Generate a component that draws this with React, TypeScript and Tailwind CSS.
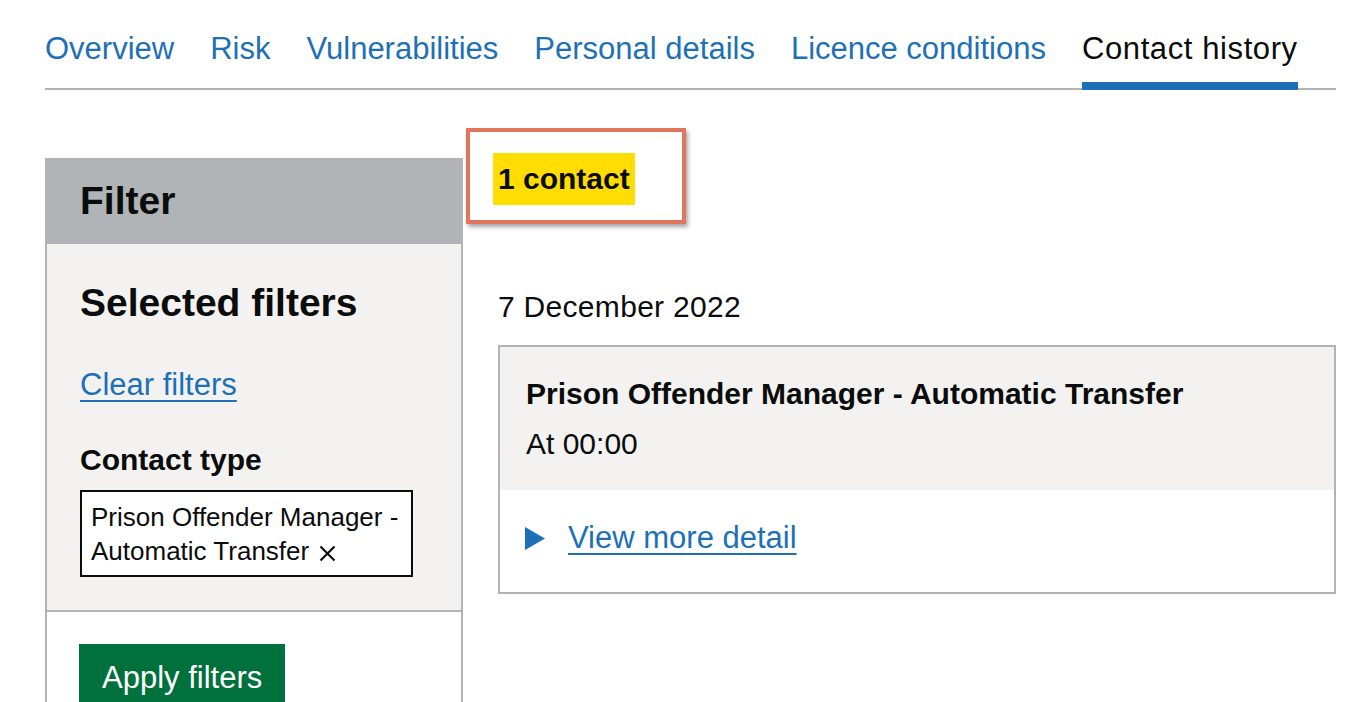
import React from "react";

const TABS = [
  { label: "Overview" },
  { label: "Risk" },
  { label: "Vulnerabilities" },
  { label: "Personal details" },
  { label: "Licence conditions" },
  { label: "Contact history", active: true },
];

function Tabs() {
  return (
    <ul className="flex gap-[36px] pt-[29px] border-b-2 border-[#b1b4b6]">
      {TABS.map((t) => (
        <li key={t.label} className="relative pb-[19px]">
          <a
            href="#"
            className={`block text-[31px] leading-[40px] ${
              t.active ? "text-[#0b0c0c] tracking-[0.6px]" : "text-[#1d70b8]"
            }`}
          >
            {t.label}
          </a>
          {t.active && (
            <span className="absolute left-0 right-0 bottom-[-2px] h-[8px] bg-[#1d70b8]" />
          )}
        </li>
      ))}
    </ul>
  );
}

function FilterPanel() {
  return (
    <div className="mt-[5px] w-[418px]">
      <div className="h-[86px] bg-[#b1b4b6] flex items-center pl-[35px]">
        <h2 className="text-[39px] font-bold leading-[48px]">Filter</h2>
      </div>
      <div className="bg-[#f3f2f1] border-x-2 border-b-2 border-[#b1b4b6] pl-[33px] pt-[35px] pb-[33px]">
        <h3 className="text-[39px] font-bold leading-[48px]">Selected filters</h3>
        <a href="#" className="mt-[38px] block text-[31px] leading-[40px] text-[#1d70b8] underline underline-offset-[5px] decoration-2">
          Clear filters
        </a>
        <h4 className="mt-[35px] text-[30px] font-bold leading-[40px]">Contact type</h4>
        <a
          href="#"
          className="mt-[10px] block w-[333px] bg-white border-2 border-[#0b0c0c] pl-[9px] pt-[8px] pb-[7px] text-[26px] leading-[34px] text-[#0b0c0c]"
        >
          Prison Offender Manager -<br />
          <span className="inline-flex items-center gap-[10px]">
            Automatic Transfer
            <svg width="17" height="17" viewBox="0 0 17 17" className="mt-[4px]">
              <path d="M1.5 1.5 L15.5 15.5 M15.5 1.5 L1.5 15.5" stroke="#0b0c0c" strokeWidth="2.2" />
            </svg>
          </span>
        </a>
      </div>
      <div className="border-x-2 border-[#b1b4b6] bg-white pl-[32px] pt-[32px] pb-[30px]">
        <button className="bg-[#00703c] text-white text-[31px] leading-[40px] px-[23px] pt-[14px] pb-[12px] shadow-[0_3px_0_#002d18]">
          Apply filters
        </button>
      </div>
    </div>
  );
}

function ContactCard() {
  return (
    <div className="mt-[18px] border-2 border-[#b1b4b6]">
      <div className="bg-[#f3f2f1] pl-[26px] pt-[27px] pb-[26px]">
        <h3 className="text-[30px] font-bold leading-[40px]">
          Prison Offender Manager - Automatic Transfer
        </h3>
        <p className="mt-[10px] text-[30px] leading-[40px]">At 00:00</p>
      </div>
      <div className="bg-white pl-[25px] pt-[28px] pb-[34px] flex items-center gap-[23px]">
        <svg width="20" height="23" viewBox="0 0 20 23">
          <polygon points="0,0 20,11.5 0,23" fill="#1d70b8" />
        </svg>
        <a href="#" className="text-[31px] leading-[40px] text-[#1d70b8] underline underline-offset-[5px] decoration-2">
          View more detail
        </a>
      </div>
    </div>
  );
}

export default function App() {
  return (
    <div
      className="min-h-screen bg-white text-[#0b0c0c] pl-[45px] pr-[29px]"
      style={{ fontFamily: '"Liberation Sans", Arial, sans-serif' }}
    >
      <Tabs />
      <div className="flex gap-[35px] pt-[63px]">
        <FilterPanel />
        <div className="flex-1">
          <div className="relative inline-block -ml-[5px]">
            <h2 className="bg-[#ffdd00] px-[5px] text-[30px] font-bold leading-[52px]">
              1 contact
            </h2>
            <span className="absolute left-[-27px] top-[-25px] w-[220px] h-[96px] border-4 border-[#e0775c] shadow-[2px_3px_4px_rgba(0,0,0,0.35)]" />
          </div>
          <p className="mt-[82px] text-[30px] leading-[40px] tracking-[0.3px]">7 December 2022</p>
          <ContactCard />
        </div>
      </div>
    </div>
  );
}
